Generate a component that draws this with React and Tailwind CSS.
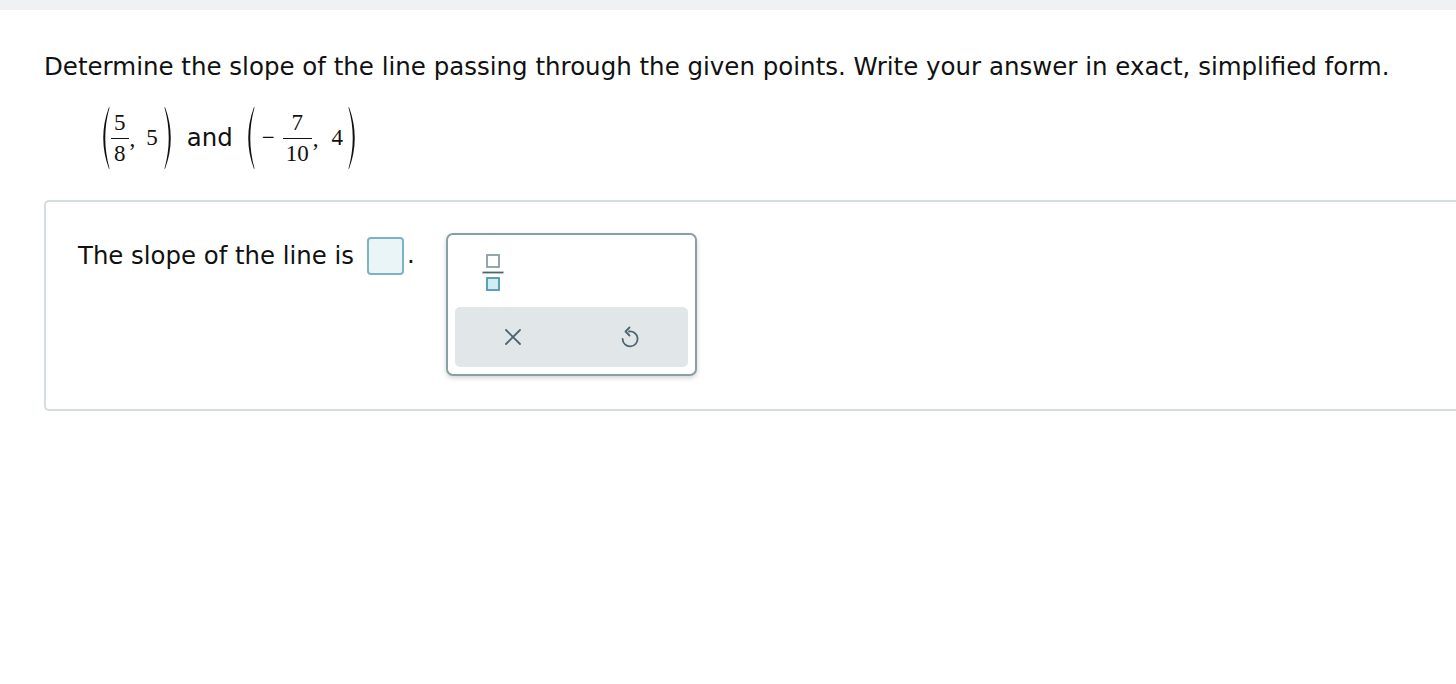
export default function App() {
  const serif = { fontFamily: '"Liberation Serif", "Times New Roman", serif' };

  const Paren = ({ flip }) => (
    <svg width="13" height="64" viewBox="0 0 13 64" className="shrink-0">
      <path
        d={flip ? "M2 1 Q13.5 32 2 63 L1.5 62.4 Q10 32 1.5 1.6 Z" : "M11 1 Q-0.5 32 11 63 L11.5 62.4 Q3 32 11.5 1.6 Z"}
        fill="#111"
      />
    </svg>
  );

  const Frac = ({ top, bottom }) => (
    <span className="inline-flex flex-col items-center leading-none text-[23px]" style={serif}>
      <span className="pb-[4px] px-[3px]">{top}</span>
      <span className="border-t-[1.5px] border-[#111] w-full pt-[3px] text-center px-[3px]">{bottom}</span>
    </span>
  );

  return (
    <div className="w-[1456px] h-[684px] bg-white font-['DejaVu_Sans',Verdana,sans-serif] text-[#111]">
      <div className="h-[10px] bg-[#eff1f3]" />

      <div className="pl-[44px]">
        <p className="pt-[42px] text-[24.5px] leading-[30px] whitespace-nowrap">
          Determine the slope of the line passing through the given points. Write your answer in exact, simplified form.
        </p>

        <div className="flex items-center h-[66px] mt-[23px] ml-[54px]">
          <Paren />
          <Frac top="5" bottom="8" />
          <span className="text-[23px] mt-[2px] ml-[1px] mr-[11px]" style={serif}>,</span>
          <span className="text-[23px] mr-[5px]" style={serif}>5</span>
          <Paren flip />
          <span className="text-[24.4px] ml-[11px] mr-[10px]">and</span>
          <Paren />
          <span className="text-[23px] ml-[6px] mr-[8px]" style={serif}>−</span>
          <Frac top="7" bottom="10" />
          <span className="text-[23px] mt-[2px] ml-[1px] mr-[13px]" style={serif}>,</span>
          <span className="text-[23px] mr-[4px]" style={serif}>4</span>
          <Paren flip />
        </div>

        <div className="mt-[29px] h-[211px] border-2 border-r-0 border-[#d6dde0] rounded-l-[5px] flex items-start pl-[32px] pt-[33px]">
          <div className="flex items-center h-[42px]">
            <span className="text-[24.4px]">The slope of the line is</span>
            <span className="ml-[13px] w-[37px] h-[38px] bg-[#eaf5f8] border-2 border-[#7fb3c2] rounded-[4px]" />
            <span className="text-[24.4px] ml-[3px] mb-[2px]">.</span>
          </div>

          <div className="ml-[31px] mt-[-2px] w-[251px] h-[143px] border-2 border-[#8a9ea6] rounded-[7px] bg-white shadow-[0_2px_5px_rgba(0,0,0,0.18)] flex flex-col p-[7px]">
            <div className="h-[65px] flex items-start pl-[27px] pt-[11px]">
              <svg width="22" height="40" viewBox="0 0 22 40">
                <rect x="5" y="2" width="12" height="12" fill="white" stroke="#8a9ea6" strokeWidth="1.8" />
                <line x1="0.5" y1="19.5" x2="21.5" y2="19.5" stroke="#4b6570" strokeWidth="1.8" />
                <rect x="5" y="25" width="12" height="12" fill="#d3ecf2" stroke="#4a9ab0" strokeWidth="1.8" />
              </svg>
            </div>
            <div className="flex-1 bg-[#e1e6e9] rounded-[5px] flex items-center">
              <div className="flex-1 flex justify-center">
                <svg width="20" height="20" viewBox="0 0 20 20">
                  <path d="M3 3 L17 17 M17 3 L3 17" stroke="#4b6570" strokeWidth="1.8" strokeLinecap="round" />
                </svg>
              </div>
              <div className="flex-1 flex justify-center">
                <svg width="20" height="24" viewBox="0 0 20 24">
                  <path
                    d="M9 6.5 A7.5 7.5 0 1 1 2.6 14"
                    fill="none"
                    stroke="#4b6570"
                    strokeWidth="1.8"
                    strokeLinecap="round"
                  />
                  <path d="M9.5 2.5 L5.5 6.5 L9.5 10.5" fill="none" stroke="#4b6570" strokeWidth="1.8" strokeLinecap="round" strokeLinejoin="round" />
                </svg>
              </div>
            </div>
          </div>
        </div>
      </div>
    </div>
  );
}
